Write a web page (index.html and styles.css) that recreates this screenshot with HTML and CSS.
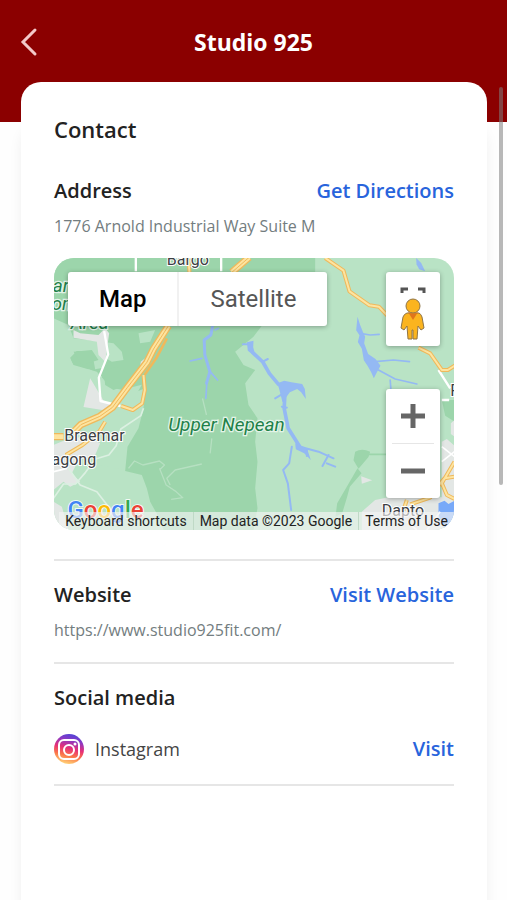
FILE: index.html
```
<!DOCTYPE html>
<html lang="en">
  <head>
    <meta charset="UTF-8" />
    <meta name="viewport" content="width=device-width, initial-scale=1" />
    <title>Studio 925</title>
    <link rel="stylesheet" href="styles.css">
  </head>
  <body>
    <header class="topbar">
      <button class="back" aria-label="Back">
        <svg width="18" height="30" viewBox="0 0 18 30"><path d="M15 3 3 15l12 12" /></svg>
      </button>
      <h1>Studio 925</h1>
    </header>

    <main class="card">
      <h2>Contact</h2>

      <section class="section">
        <div class="row">
          <h3>Address</h3>
          <a href="#directions">Get Directions</a>
        </div>
        <p class="detail">1776 Arnold Industrial Way Suite M</p>

        <div class="map">
          <svg class="map-art" viewBox="0 9 1203 816" preserveAspectRatio="xMidYMid slice" aria-hidden="true">
            <rect y="9" width="1203" height="816" fill="#b9e3c5" />
            <!-- forest -->
            <g fill="#9cd5ab">
              <path d="M0 9H785V70L770 120 690 212H625L600 245 545 290 570 330 605 345 575 385 585 450 612 490 605 560 612 620 605 700 612 760 600 825H330L312 780 290 740 280 700 265 660 215 648 222 575 255 520 270 460 275 400 200 430 130 350 60 330 0 220Z" />
              <path d="M905 590q20-12 45 0l-5 16-30 35-15-25zM912 640l12 15-35 40-8 30-15 50-20 10 5-40 35-60z" />
              <path d="M1165 435h38v65l-28-18z" />
            </g>
            <g fill="#b9e3c5">
              <path d="M0 190l45 20 15 40 85 10 35 5 25 25 5 25-35 5-20-12-5 30-25 5-10-55H70l-20 20 10 28 50 8 35 20 5 30 55 10 60-15-40 70-60 55-65 25-100 10z" />
              <path d="M255 235l50-10-15 35-30 5zM170 485l85-15-10 50-30 60-5 65-95-20 20-50z" />
            </g>
            <path d="M150 345l40-10 30 20 15 20-15 15-40 15-25-15zM60 290l55-5 20 30-50 15z" fill="#9cd5ab" />
            <!-- towns -->
            <g fill="#e3e7e5">
              <path d="M60 225l20 10 55 5 20-20 12 15-12 85-20-20-5-40-70-12zM110 370l30 50 12 20 35 8-22 20-75-12zM262 320l25-20-5 25-22 8z" />
              <path d="M0 570l60-25 60 10 20 10-15 35-50 15-20 40 25 25-30 15-20-15-30 25z" />
              <path d="M0 740l25 15 20 70H0zM925 770l40-35 40-8h160V560l15-8 23 20v253H925z" />
              <path d="M923 664l33 12-31 10zM1192 505l11-10v50l-11-8z" />
            </g>
            <path d="M1155 745l18-8 12 10 18-10v88h-28l-20-45z" fill="#78a9f8" />
            <!-- pale tracks -->
            <g fill="none" stroke="#d0ecd8" stroke-width="5" stroke-linejoin="round">
              <path stroke="#dcf0e2" d="M270 460l-8 22-60 40-14 50-22 28-40 12-30 40-30 35H30L0 730M45 640l35 50 50 20 35 45" />
              <path opacity=".5" stroke-width="4" d="M225 640l18-22 25 12 50-12 15 12-15 15M318 640l20 50 30 20 20 18-35 5M350 690l-10-20 25-25 80-18M447 430l12 50M475 550l-5 45" />
              <path stroke="#9cd5ab" d="M945 598h55" />
            </g>
            <!-- rivers -->
            <g fill="none" stroke="#94b9f3" stroke-linejoin="round" stroke-linecap="round">
              <path stroke-width="9" d="M477 215l-5 25-20 15 2 45 15 50-10 35" />
              <path stroke-width="5" d="M410 318l35-8M460 385l-3 45M470 350l22 25M485 225l10-5" />
              <path stroke-width="11" d="M590 268l8 25 30 28 20 35 27 32M695 400l-3 60 12 60 35 55" />
              <path stroke-width="6" d="M568 268h20M628 320l15-8M665 430l25-15M685 455l15 3M740 575l55 15 45 20M760 585v18M825 600l-18 33M820 625l25 10M715 575l-8 50-18 20 14 40 10 80" />
              <path stroke-width="5" d="M920 235l30 5 27-2M965 320l55-5 48 5M975 345l50 27 65 15M1010 375l2 25" />
            </g>
            <g fill="#94b9f3">
              <path d="M580 262l20-5-2 42-15-12zM672 385l20-8 22 5 32 5 8 15 3 30-14-20-12-10-22 10-22 30-10-40zM725 565l25 10 12 10 10 30-20-20-25-12z" />
              <path d="M912 185l8 25 8 20 7 15-3 20 12 32 22 15 15 20-10 18-10 20-8-18-10-18-12-18-6-35-12-20 5-20-10-15z" />
              <path d="M1088 9l15 15 12 25-18-6-8-15z" />
            </g>
            <!-- white roads -->
            <g fill="none" stroke="#fff" stroke-width="7" stroke-linejoin="round">
              <path d="M247 9v40M503 9v40M152 228l12 70-28 70 5 70 60 15M1155 345l35 55M1165 435h22" />
              <path stroke-width="5" d="M1165 575l38 30M1165 620l38-30M1060 800l30 25M1160 770l-40 55M0 650l40-10" />
            </g>
            <!-- highways -->
            <g fill="none" stroke-linejoin="round">
              <g stroke="#efb95c">
                <path id="minor" stroke-width="12" d="M270 360l4 45-8 40-28 20-35-12M155 500l-18 30-50 40-50 30M815 9l55 38 18 62 60 42 28 4 27 28M1095 278l35 17 35 50h18l22-14M405 9l3 45M1203 620l-38 65 15 35 23 12M1203 665l-30 5-23 28-20 30-60 20M1060 735l-10 30" />
                <path stroke-width="22" d="M587 7l-52 45M345 212l-45 70-20 40-58 75-45 60-38 27-57 25-25 25M30 545H0" />
                <path stroke-width="8" d="M340 250l-32 60-35 50" />
              </g>
              <path stroke="#fde4a0" stroke-width="6" d="M270 360l4 45-8 40-28 20-35-12M155 500l-18 30-50 40-50 30M815 9l55 38 18 62 60 42 28 4 27 28M1095 278l35 17 35 50h18l22-14M405 9l3 45M1203 620l-38 65 15 35 23 12M1203 665l-30 5-23 28-20 30-60 20M1060 735l-10 30" />
              <path stroke="#fde4a0" stroke-width="14" d="M587 7l-52 45M345 212l-45 70-20 40-58 75-45 60-38 27-57 25-25 25M30 545H0" />
              <path stroke="#efb95c" stroke-width="3" d="M587 7l-52 45M345 212l-45 70-20 40-58 75-45 60-38 27-57 25-25 25" />
            </g>
            <g class="place">
              <text x="340" y="30">Bargo</text>
              <text x="32" y="558">Braemar</text>
              <text x="-6" y="630">agong</text>
              <text x="985" y="784">Dapto</text>
              <text x="1190" y="424">Fi</text>
            </g>
            <g class="park">
              <text x="-2" y="110">ar</text>
              <text x="-6" y="166">on</text>
              <text x="52" y="223">Area</text>
              <text x="344" y="527">Upper Nepean</text>
            </g>
            <text class="logo" x="42" y="790"><tspan fill="#4285f4">G</tspan><tspan fill="#ea4335">o</tspan><tspan fill="#fbbc05">o</tspan><tspan fill="#4285f4">g</tspan><tspan fill="#34a853">l</tspan><tspan fill="#ea4335">e</tspan></text>
          </svg>

          <div class="map-controls">
            <div class="map-type">
              <button class="active">Map</button>
              <button>Satellite</button>
            </div>
            <div class="map-tools">
              <button class="pegman" aria-label="Street View">
                <svg width="30" height="56" viewBox="0 0 30 56">
                  <path d="M4 9V5h6M20 5h6v4" fill="none" stroke="#555" stroke-width="3" />
                  <g fill="#fbb41f" stroke="#8f7446" stroke-width="1">
                    <path d="M9 29h12q2 1 3 4l2 11-3 2-3-4-1 13h-4v-9h-1v9h-4l-1-13-3 4-3-2 2-11q1-3 4-4z" />
                    <circle cx="15" cy="22" r="7" />
                  </g>
                  <path d="M10 28q5 3 10 0l-5 8z" fill="#e0751b" />
                </svg>
              </button>
              <div class="zoom">
                <button aria-label="Zoom in">
                  <svg width="26" height="26" viewBox="0 0 26 26"><path d="M1 13h24M13 1v24" /></svg>
                </button>
                <button aria-label="Zoom out">
                  <svg width="26" height="26" viewBox="0 0 26 26"><path d="M1 13h24" /></svg>
                </button>
              </div>
            </div>
          </div>

          <div class="map-footer">
            <button>Keyboard shortcuts</button>
            <span>Map data ©2023 Google</span>
            <a href="#terms">Terms of Use</a>
          </div>
        </div>
      </section>

      <section class="section">
        <div class="row">
          <h3>Website</h3>
          <a href="#website">Visit Website</a>
        </div>
        <p class="detail">https://www.studio925fit.com/</p>
      </section>

      <section class="section">
        <h3>Social media</h3>
        <div class="row social">
          <svg width="30" height="30" viewBox="0 0 30 30" aria-hidden="true">
            <defs>
              <linearGradient id="insta" x1=".65" y1="0" x2=".4" y2="1">
                <stop offset="0" stop-color="#4d45d8" />
                <stop offset=".22" stop-color="#8c38c4" />
                <stop offset=".48" stop-color="#e62f78" />
                <stop offset=".72" stop-color="#fb7549" />
                <stop offset="1" stop-color="#ffd477" />
              </linearGradient>
            </defs>
            <circle cx="15" cy="15" r="15" fill="url(#insta)" />
            <g fill="none" stroke="#fff" stroke-width="2">
              <rect x="5" y="6" width="20" height="19" rx="5" />
              <circle cx="15" cy="16" r="5" />
            </g>
            <circle cx="21" cy="10" r="1.5" fill="#fff" />
          </svg>
          <span>Instagram</span>
          <a href="#instagram">Visit</a>
        </div>
      </section>
    </main>
    <div class="scrollbar"></div>
  </body>
</html>
```
FILE: styles.css
```
* {
  box-sizing: border-box;
}
body {
  margin: 0;
  min-height: 100vh;
  display: flex;
  flex-direction: column;
  font-family: "Open Sans", sans-serif;
  background: #fefefe;
  color: #222;
}
h1,
h2,
h3,
p {
  margin: 0;
}
button {
  padding: 0;
  border: none;
  background: none;
  font: inherit;
  color: inherit;
  cursor: pointer;
}
svg {
  display: block;
  flex: none;
}
.topbar {
  display: grid;
  grid-template-columns: 18px 1fr 18px;
  align-items: center;
  padding: 26px 20px 64px;
  background: #8b0000;
  color: #fff;
}
.back path {
  fill: none;
  stroke: #f3c9c9;
  stroke-width: 3;
  stroke-linecap: round;
}
h1 {
  font-size: 23px;
  line-height: 32px;
  font-weight: 700;
  text-align: center;
}
.card {
  flex: 1;
  margin: -40px 20px 0 21px;
  padding: 31px 33px 0;
  background: #fff;
  border-radius: 20px 20px 0 0;
  box-shadow: 0 44px 14px rgba(0, 0, 0, 0.06);
}
h2 {
  margin-bottom: 12px;
  font-size: 22px;
  line-height: 32px;
  font-weight: 600;
}
h3,
.row a {
  font-size: 20px;
  line-height: 28px;
  font-weight: 600;
}
.section {
  padding: 20px 0;
  border-bottom: 2px solid #e6e6e6;
}
.row {
  display: flex;
  align-items: center;
  justify-content: space-between;
}
.row a {
  color: #2864dc;
  text-decoration: none;
}
.detail {
  margin-top: 9px;
  font-size: 16px;
  line-height: 24px;
  color: #737d80;
}
.social {
  gap: 11px;
  margin-top: 22px;
  font-size: 18px;
  line-height: 28px;
  color: #444;
}
.social a {
  margin-left: auto;
}

/* map */
.map {
  position: relative;
  display: flex;
  flex-direction: column;
  justify-content: space-between;
  height: 272px;
  margin: 20px 0 9px;
  border-radius: 20px;
  overflow: hidden;
  font-family: Roboto, sans-serif;
}
.map-art {
  position: absolute;
  inset: 0;
  width: 100%;
  height: 100%;
}
.map-controls,
.map-footer {
  position: relative;
}
.map-controls {
  display: flex;
  align-items: flex-start;
  justify-content: space-between;
  padding: 14px 14px 0;
}
.map-type,
.pegman,
.zoom {
  background: #fff;
  border-radius: 3px;
  box-shadow: 0 1px 5px rgba(0, 0, 0, 0.3);
}
.map-type {
  display: flex;
  font-size: 24px;
  line-height: 54px;
  color: #565656;
}
.map-type button {
  padding: 0 31px;
}
.map-type .active {
  font-weight: 500;
  color: #000;
  border-right: 2px solid #f1f1f1;
}
.map-tools {
  display: flex;
  flex-direction: column;
  gap: 43px;
  width: 54px;
}
.pegman {
  display: flex;
  justify-content: center;
  padding: 12px 0 6px;
}
.zoom {
  display: flex;
  flex-direction: column;
  padding: 0 6px;
}
.zoom button {
  display: flex;
  justify-content: center;
  padding: 14px 0;
}
.zoom button + button {
  border-top: 1px solid #e6e6e6;
}
.zoom path {
  stroke: #666;
  stroke-width: 5;
}
.map-footer {
  display: flex;
  justify-content: flex-end;
  font-size: 14px;
  line-height: 18px;
  color: #222;
}
.map-footer > * {
  padding: 0 6px;
  background: rgba(245, 245, 245, 0.65);
  white-space: nowrap;
}
.map-footer > * + * {
  border-left: 1px solid #bfd9c6;
}
.map-footer a {
  color: inherit;
  text-decoration: none;
}
/* map labels are in map units, 3 to a pixel */
.place {
  font-size: 48px;
  fill: #3c4043;
  stroke: #fff;
  stroke-width: 6px;
  paint-order: stroke;
}
.park {
  font-size: 57px;
  font-style: italic;
  fill: #218049;
  stroke: #e3f4e8;
  stroke-width: 8px;
  paint-order: stroke;
}
.logo {
  font-size: 72px;
  font-weight: 500;
  stroke: #fff;
  stroke-width: 5px;
  paint-order: stroke;
}
.scrollbar {
  position: absolute;
  top: 87px;
  right: 4px;
  width: 4px;
  height: 398px;
  border-radius: 2px;
  background: rgba(125, 125, 125, 0.55);
}
```
